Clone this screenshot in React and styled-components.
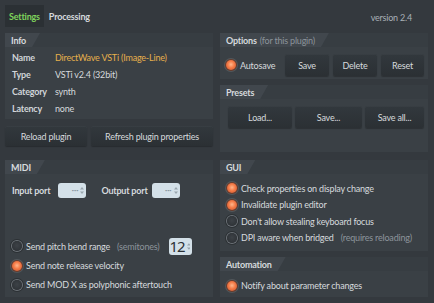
import React from "react";
import styled, { createGlobalStyle } from "styled-components";

const Global = createGlobalStyle`
  body {
    margin: 0;
    background: #34393e;
  }
`;

const Page = styled.div`
  width: 434px;
  height: 303px;
  box-sizing: border-box;
  padding: 0 6px 0 5px;
  background: #34393e;
  font-family: Lato, "Liberation Sans", sans-serif;
  font-size: 9px;
  letter-spacing: -0.2px;
  color: #d6dadd;
  overflow: hidden;
  white-space: nowrap;
`;

const TopBar = styled.div`
  height: 27px;
  box-sizing: border-box;
  padding-top: 5px;
  display: flex;
  align-items: stretch;
`;

const Tab = styled.div`
  display: flex;
  align-items: center;
  padding: 0 4px;
  margin-right: 1px;
  font-weight: 700;
  background: ${(p) => (p.$active ? "#2b3034" : "transparent")};
  color: ${(p) => (p.$active ? "#7fd35c" : "#d6dadd")};
`;

const Version = styled.div`
  margin-left: auto;
  margin-right: 16px;
  align-self: center;
  padding-top: 2px;
  color: #a9b0b6;
`;

const Grid = styled.div`
  display: grid;
  grid-template-columns: 208px 208px;
  grid-template-rows: 119px 137px;
  column-gap: 7px;
  row-gap: 8px;
  padding-top: 6px;
`;

const Column = styled.div`
  display: flex;
  flex-direction: column;
  gap: ${(p) => p.$gap || 6}px;
`;

const Panel = styled.section`
  display: flex;
  flex-direction: column;
  background: #3a4045;
  height: ${(p) => (p.$h ? `${p.$h}px` : "auto")};
  flex: ${(p) => (p.$fill ? 1 : "none")};
`;

const Header = styled.div`
  height: 14px;
  flex: none;
  display: flex;
  background: #373d42;
`;

const HeaderTab = styled.div`
  display: flex;
  align-items: center;
  padding: 0 14px 0 6px;
  background: #41474d;
  clip-path: polygon(0 0, 100% 0, calc(100% - 8px) 100%, 0 100%);
  font-weight: 700;
  color: #d6dadd;
`;

const Muted = styled.span`
  color: #8c949b;
  font-weight: 400;
  margin-left: 3px;
`;

const Body = styled.div`
  flex: 1;
  display: flex;
  flex-direction: column;
  padding: ${(p) => p.$pad || "0"};
`;

const InfoRow = styled.div`
  display: flex;
  align-items: center;
  height: 17px;
  padding-left: 7px;
`;

const Label = styled.div`
  width: 43px;
  font-weight: 700;
  color: #d0d4d8;
`;

const Value = styled.div`
  color: ${(p) => (p.$accent ? "#e6b04c" : "#d6dadd")};
`;

const ButtonRow = styled.div`
  display: flex;
  gap: ${(p) => p.$gap || 4}px;
  align-items: center;
`;

const Button = styled.button`
  height: ${(p) => p.$h || 20}px;
  width: ${(p) => (p.$w ? `${p.$w}px` : "auto")};
  flex: ${(p) => (p.$w ? "none" : 1)};
  border: none;
  border-radius: 2px;
  background: linear-gradient(#32383d, #2b3034);
  box-shadow: inset 0 1px 0 rgba(255, 255, 255, 0.03), 0 1px 1px rgba(0, 0, 0, 0.25);
  color: #d6dadd;
  font-family: inherit;
  font-size: 9px;
  letter-spacing: -0.2px;
  padding: 0;
`;

const Radio = styled.span`
  width: 10px;
  height: 10px;
  border-radius: 50%;
  flex: none;
  box-sizing: border-box;
  background: ${(p) =>
    p.$on
      ? "radial-gradient(circle at 50% 45%, #ffb68c 0, #f47a46 45%, #c9502a 100%)"
      : "radial-gradient(circle at 50% 45%, #3d4247 0, #2a2e32 100%)"};
  box-shadow: ${(p) =>
    p.$on
      ? "0 0 0 1px #6a3a2a, 0 0 0 2px rgba(255,255,255,0.12)"
      : "0 0 0 1px #6c7278, 0 0 0 2px rgba(0,0,0,0.25)"};
`;

const RadioRow = styled.div`
  display: flex;
  align-items: center;
  gap: 4px;
  height: ${(p) => p.$h || 17}px;
  width: ${(p) => (p.$w ? `${p.$w}px` : "auto")};
  flex: none;
  padding-left: ${(p) => p.$indent ?? 7}px;
`;

const PortRow = styled.div`
  display: flex;
  align-items: center;
  height: 16px;
  margin-top: 8px;
  padding-left: 7px;
  font-weight: 700;
`;

const SpinBox = styled.div`
  width: ${(p) => p.$w || 28}px;
  height: ${(p) => p.$h || 15}px;
  margin: 0 ${(p) => p.$mr || 0}px 0 ${(p) => p.$ml || 0}px;
  flex: none;
  border-radius: 3px;
  background: #d3e0e8;
  display: flex;
  align-items: center;
  justify-content: flex-end;
  padding-right: 2px;
  box-sizing: border-box;
  gap: 2px;
`;

const Dots = styled.span`
  color: #8896a0;
  font-size: 8px;
  letter-spacing: 0;
  font-weight: 700;
`;

const BigNum = styled.span`
  color: #2b3035;
  font-size: 15px;
  line-height: 1;
  letter-spacing: -1px;
  font-family: "Noto Sans", sans-serif;
`;

const Arrows = () => (
  <svg width="4" height="9" viewBox="0 0 4 9">
    <path d="M0 3.5 L2 1 L4 3.5Z M0 5.5 L2 8 L4 5.5Z" fill="#9aa6ae" />
  </svg>
);

const MidiList = styled.div`
  margin-top: auto;
  padding-bottom: 3px;
  display: flex;
  flex-direction: column;
`;

export default function App() {
  return (
    <Page>
      <Global />
      <TopBar>
        <Tab $active>Settings</Tab>
        <Tab>Processing</Tab>
        <Version>version 2.4</Version>
      </TopBar>
      <Grid>
        <Column $gap={7}>
          <Panel $h={86}>
            <Header>
              <HeaderTab>Info</HeaderTab>
            </Header>
            <Body $pad="2px 0 0">
              <InfoRow>
                <Label>Name</Label>
                <Value $accent>DirectWave VSTi (Image-Line)</Value>
              </InfoRow>
              <InfoRow>
                <Label>Type</Label>
                <Value>VSTi v2.4 (32bit)</Value>
              </InfoRow>
              <InfoRow>
                <Label>Category</Label>
                <Value>synth</Value>
              </InfoRow>
              <InfoRow>
                <Label>Latency</Label>
                <Value>none</Value>
              </InfoRow>
            </Body>
          </Panel>
          <ButtonRow $gap={4}>
            <Button $w={82}>Reload plugin</Button>
            <Button>Refresh plugin properties</Button>
          </ButtonRow>
        </Column>

        <Column $gap={6}>
          <Panel $h={46}>
            <Header>
              <HeaderTab>
                Options<Muted>(for this plugin)</Muted>
              </HeaderTab>
            </Header>
            <Body $pad="7px 4px 3px 6px">
              <ButtonRow $gap={4}>
                <RadioRow $indent={0} $h={22} $w={55}>
                  <Radio $on />
                  Autosave
                </RadioRow>
                <Button $w={44} $h={22}>Save</Button>
                <Button $w={44} $h={22}>Delete</Button>
                <Button $w={43} $h={22}>Reset</Button>
              </ButtonRow>
            </Body>
          </Panel>
          <Panel $fill>
            <Header>
              <HeaderTab>Presets</HeaderTab>
            </Header>
            <Body $pad="7px 4px 0 8px">
              <ButtonRow $gap={3}>
                <Button $w={64} $h={22}>Load...</Button>
                <Button $w={67} $h={22}>Save...</Button>
                <Button $h={22}>Save all...</Button>
              </ButtonRow>
            </Body>
          </Panel>
        </Column>

        <Panel>
          <Header>
            <HeaderTab>MIDI</HeaderTab>
          </Header>
          <Body>
            <PortRow>
              Input port
              <SpinBox $ml={8} $mr={15}>
                <Dots>···</Dots>
                <Arrows />
              </SpinBox>
              Output port
              <SpinBox $ml={4}>
                <Dots>···</Dots>
                <Arrows />
              </SpinBox>
            </PortRow>
            <MidiList>
              <RadioRow $h={20}>
                <Radio />
                Send pitch bend range<Muted>(semitones)</Muted>
                <SpinBox $w={23} $h={17} $ml={6}>
                  <BigNum>12</BigNum>
                  <Arrows />
                </SpinBox>
              </RadioRow>
              <RadioRow $h={19}>
                <Radio $on />
                Send note release velocity
              </RadioRow>
              <RadioRow $h={19}>
                <Radio />
                Send MOD X as polyphonic aftertouch
              </RadioRow>
            </MidiList>
          </Body>
        </Panel>

        <Column $gap={6}>
          <Panel $h={91}>
            <Header>
              <HeaderTab>GUI</HeaderTab>
            </Header>
            <Body $pad="6px 0 0">
              <RadioRow $h={16.5}>
                <Radio $on />
                Check properties on display change
              </RadioRow>
              <RadioRow $h={16.5}>
                <Radio $on />
                Invalidate plugin editor
              </RadioRow>
              <RadioRow $h={16.5}>
                <Radio />
                Don't allow stealing keyboard focus
              </RadioRow>
              <RadioRow $h={16.5}>
                <Radio />
                DPI aware when bridged<Muted>(requires reloading)</Muted>
              </RadioRow>
            </Body>
          </Panel>
          <Panel $fill>
            <Header>
              <HeaderTab>Automation</HeaderTab>
            </Header>
            <Body $pad="5px 0 0">
              <RadioRow $h={19}>
                <Radio $on />
                Notify about parameter changes
              </RadioRow>
            </Body>
          </Panel>
        </Column>
      </Grid>
    </Page>
  );
}
